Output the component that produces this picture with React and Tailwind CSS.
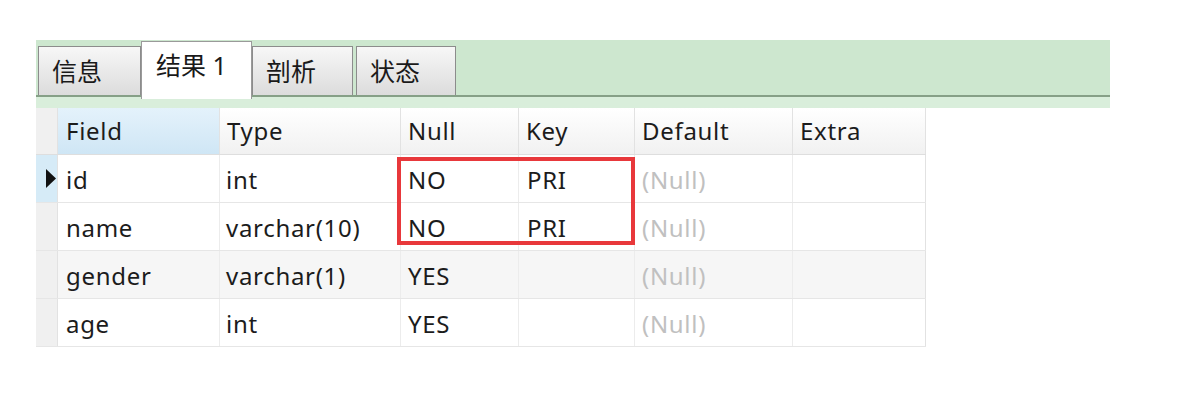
import React from "react";

const COLS = ["Field", "Type", "Null", "Key", "Default", "Extra"];

const ROWS = [
  { field: "id", type: "int", nul: "NO", key: "PRI", current: true },
  { field: "name", type: "varchar(10)", nul: "NO", key: "PRI" },
  { field: "gender", type: "varchar(1)", nul: "YES", key: "", shaded: true },
  { field: "age", type: "int", nul: "YES", key: "" },
];

const TABS = [
  { label: "信息", w: "w-[103px]" },
  { label: "结果 1", w: "w-[111px]", active: true },
  { label: "剖析", w: "w-[101px]" },
  { label: "状态", w: "w-[100px] ml-[3px]" },
];

function Tab({ label, w, active }) {
  if (active) {
    return (
      <div
        className={`${w} relative z-10 h-[58px] -mb-[4px] border border-b-0 border-[#9a9a9a] bg-white flex items-start pt-[5px] pl-[14px] text-[25px] text-[#1a1a1a]`}
      >
        {label}
      </div>
    );
  }
  return (
    <div
      className={`${w} h-[49px] border border-b-0 border-[#8c8c8c] bg-gradient-to-b from-[#f7f7f7] to-[#dcdcdc] flex items-start pt-[6px] pl-[13px] text-[25px] text-[#1a1a1a]`}
    >
      {label}
    </div>
  );
}

export default function App() {
  return (
    <div
      className="w-[1198px] h-[411px] bg-white pt-[40px] pl-[36px]"
      style={{ fontFamily: '"Noto Sans", "Noto Sans CJK SC", sans-serif' }}
    >
      {/* Tab strip */}
      <div className="w-[1074px]">
        <div className="h-[55px] bg-[#cde7cf] flex items-end pl-[2px]">
          {TABS.map((t) => (
            <Tab key={t.label} {...t} />
          ))}
        </div>
        <div className="h-[2px] bg-[#86a087]" />
        <div className="h-[11px] bg-[#d9eedb]" />
      </div>

      {/* Result grid */}
      <div className="relative w-[890px] text-[24px] tracking-[0.7px] text-[#1c1c1c]">
        <div className="grid grid-cols-[22px_162px_181px_118px_116px_158px_133px] h-[47px] border-b border-[#dedede]">
          <div className="bg-[#f0f0f0] border-r border-[#e2e2e2]" />
          {COLS.map((c, i) => (
            <div
              key={c}
              className={`flex items-center border-r border-[#e2e2e2] ${
                i === 0
                  ? "pl-[8px] bg-gradient-to-b from-[#e4f2fb] to-[#cfe6f5]"
                  : "pl-[7px] bg-gradient-to-b from-white to-[#f1f1f1]"
              }`}
            >
              {c}
            </div>
          ))}
        </div>
        {ROWS.map((r) => (
          <div
            key={r.field}
            className={`grid grid-cols-[22px_162px_181px_118px_116px_158px_133px] h-[48px] border-b border-[#e6e6e6] ${
              r.shaded ? "bg-[#f6f6f6]" : "bg-white"
            }`}
          >
            <div
              className={`flex items-center pl-[10px] border-r border-[#e2e2e2] ${
                r.current ? "bg-[#d6ebf7]" : "bg-[#f0f0f0]"
              }`}
            >
              {r.current && (
                <svg width="10" height="19" viewBox="0 0 10 19" className="shrink-0">
                  <path d="M0 0 L10 9.5 L0 19 Z" fill="#111" />
                </svg>
              )}
            </div>
            <div className="flex items-center pt-[3px] pl-[8px] border-r border-[#ececec]">{r.field}</div>
            <div className="flex items-center pt-[3px] pl-[6px] border-r border-[#ececec]">{r.type}</div>
            <div className="flex items-center pt-[3px] pl-[7px] border-r border-[#ececec]">{r.nul}</div>
            <div className="flex items-center pt-[3px] pl-[8px] border-r border-[#ececec]">{r.key}</div>
            <div className="flex items-center pt-[3px] pl-[7px] border-r border-[#ececec] text-[#c0c0c0]">(Null)</div>
            <div className="border-r border-[#e2e2e2]" />
          </div>
        ))}

        {/* Red highlight annotation */}
        <div className="absolute left-[361px] top-[49px] w-[238px] h-[88px] border-[4px] border-[#e8383b] pointer-events-none" />
      </div>
    </div>
  );
}
